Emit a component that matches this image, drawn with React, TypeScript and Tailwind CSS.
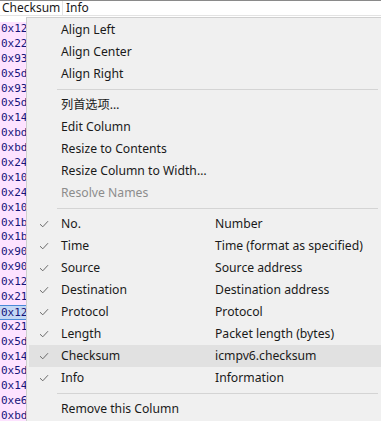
const rows = [
  '0x12', '0x22', '0x93', '0x5d', '0x93', '0x5d', '0x14', '0xbd', '0xbd',
  '0x24', '0x10', '0x24', '0x10', '0x1b', '0x1b', '0x90', '0x90', '0x12',
  '0x21', '0x12', '0x21', '0x5d', '0x14', '0x5d', '0x14', '0xe6', '0xbd',
];

type Item =
  | { kind: 'sep' }
  | { kind: 'item'; label: string; desc?: string; checked?: boolean; disabled?: boolean; active?: boolean };

const items: Item[] = [
  { kind: 'item', label: 'Align Left' },
  { kind: 'item', label: 'Align Center' },
  { kind: 'item', label: 'Align Right' },
  { kind: 'sep' },
  { kind: 'item', label: '列首选项…' },
  { kind: 'item', label: 'Edit Column' },
  { kind: 'item', label: 'Resize to Contents' },
  { kind: 'item', label: 'Resize Column to Width…' },
  { kind: 'item', label: 'Resolve Names', disabled: true },
  { kind: 'sep' },
  { kind: 'item', label: 'No.', desc: 'Number', checked: true },
  { kind: 'item', label: 'Time', desc: 'Time (format as specified)', checked: true },
  { kind: 'item', label: 'Source', desc: 'Source address', checked: true },
  { kind: 'item', label: 'Destination', desc: 'Destination address', checked: true },
  { kind: 'item', label: 'Protocol', desc: 'Protocol', checked: true },
  { kind: 'item', label: 'Length', desc: 'Packet length (bytes)', checked: true },
  { kind: 'item', label: 'Checksum', desc: 'icmpv6.checksum', checked: true, active: true },
  { kind: 'item', label: 'Info', desc: 'Information', checked: true },
  { kind: 'sep' },
  { kind: 'item', label: 'Remove this Column' },
];

const Check = () => (
  <svg width="10" height="8" viewBox="0 0 10 8" fill="none">
    <path d="M1 4.2 L3.8 6.8 L9 1.2" stroke="#6a6a6a" strokeWidth="1" />
  </svg>
);

export default function App() {
  return (
    <div
      className="relative w-[381px] h-[421px] overflow-hidden bg-white"
      style={{ fontFamily: '"Noto Sans", "Noto Sans CJK SC", sans-serif' }}
    >
      {/* header */}
      <div className="flex h-[16px] border-t border-[#8a8a8a] border-b border-b-[#e3e3e3] text-[12px] leading-[14px] text-[#1a1a1a]">
        <div className="w-[63px] pl-[2px] border-r border-[#e3e3e3]">Checksum</div>
        <div className="pl-[3px]">Info</div>
      </div>

      {/* packet rows */}
      <div className="w-[63px] pt-[6px]" style={{ fontFamily: '"DejaVu Sans Mono", monospace' }}>
        {rows.map((r, i) => (
          <div
            key={i}
            className={
              i === 19
                ? 'h-[14.9px] leading-[13px] text-[11px] pl-[1px] bg-[#c4d8f5] border-y border-[#4a8ad8] text-[#14147a]'
                : 'h-[14.9px] leading-[14.9px] text-[11px] pl-[1px] bg-[#fde2ff] text-[#14147a]'
            }
          >
            {r}
          </div>
        ))}
      </div>

      {/* context menu */}
      <div className="absolute left-[26px] top-[17px] w-[358px] bg-[#f0f0f0] border border-[#cfcfcf] pt-[1px] pb-[2px] text-[12.2px] text-[#1a1a1a]">
        {items.map((it, i) =>
          it.kind === 'sep' ? (
            <div key={i} className="h-[9px] flex items-center pl-[30px] pr-[5px]">
              <div className="h-px w-full bg-[#d4d4d4]" />
            </div>
          ) : (
            <div
              key={i}
              className={
                'mx-[2px] h-[22px] flex items-center ' +
                (it.active ? 'bg-[#e1e1e1] ' : '') +
                (it.disabled ? 'text-[#8c8c8c]' : '')
              }
            >
              <div className="w-[32px] flex justify-center pr-[3px]">{it.checked ? <Check /> : null}</div>
              <div className="w-[154px] whitespace-nowrap">{it.label}</div>
              {it.desc ? <div className="whitespace-nowrap">{it.desc}</div> : null}
            </div>
          )
        )}
      </div>
    </div>
  );
}
